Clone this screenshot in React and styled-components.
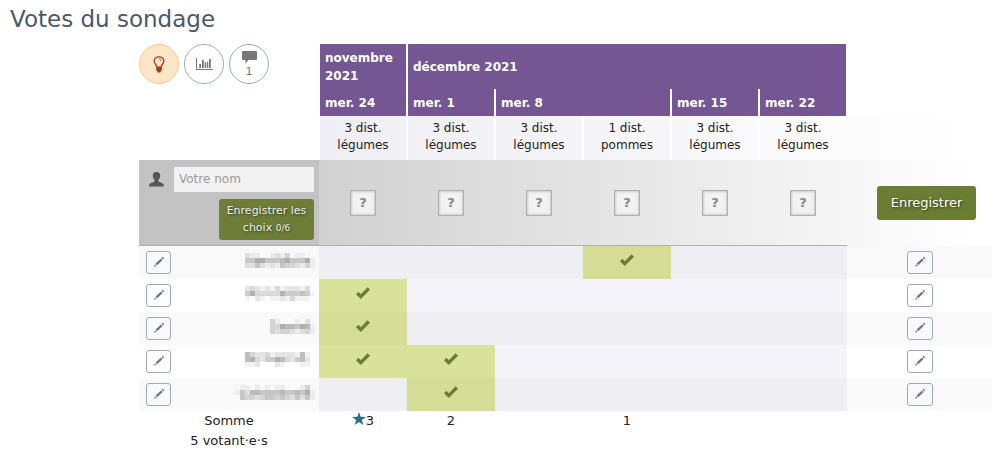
import React from "react";
import styled, { createGlobalStyle, css } from "styled-components";

const Global = createGlobalStyle`
  * { box-sizing: border-box; }
  body {
    margin: 0;
    background: #fff;
    color: #222;
    font-family: "DejaVu Sans", "Liberation Sans", sans-serif;
    font-size: 13px;
    line-height: 20px;
  }
  button, input { font-family: inherit; }
`;

const Page = styled.main`
  padding: 4px 11px 12px 10px;
`;
const Title = styled.h1`
  margin: 0 0 10px;
  font-size: 23px;
  line-height: 30px;
  font-weight: 400;
  color: #4b596d;
`;
const Poll = styled.div`
  margin-left: 129px;
`;
const Table = styled.table`
  width: 100%;
  table-layout: fixed;
  border-collapse: separate;
  border-spacing: 0;
  th, td { padding: 0; }
`;
const NameCol = styled.col`
  width: 180px;
`;
const ActionCol = styled.col`
  width: 145px;
`;
const ToolsCell = styled.td`
  vertical-align: top;
`;
const Tools = styled.div`
  display: flex;
  gap: 5px;
`;
const RoundButton = styled.button`
  display: flex;
  flex-direction: column;
  align-items: center;
  justify-content: center;
  gap: 2px;
  width: 40px;
  height: 40px;
  padding: 0;
  border: 1px solid ${(p) => (p.$active ? "#fdc886" : "#9aabc1")};
  border-radius: 50%;
  background: ${(p) => (p.$active ? "#fde5c8" : "#fff")};
  color: ${(p) => (p.$active ? "#a5391a" : "#777")};
  font-size: 11px;
  line-height: 12px;
`;
const headCell = css`
  background: #735692;
  color: #fff;
  font-size: 12px;
  line-height: 18px;
  font-weight: 700;
  text-align: left;
  border-left: 1px solid #fff;
  border-right: 1px solid #fff;
`;
const Month = styled.th`
  ${headCell}
  && { padding: 0 5px; }
  height: 45px;
`;
const Day = styled.th`
  ${headCell}
  && { padding: 0 5px; }
  height: 27px;
`;
const MomentRow = styled.tr`
  background: linear-gradient(to right, #fff 180px, #eeeef4 180px, #fff 98%);
`;
const Moment = styled.th`
  && { padding-bottom: 2px; }
  height: 44px;
  border-left: 1px solid #fff;
  border-right: 1px solid #fff;
  font-size: 12px;
  line-height: 17px;
  font-weight: 400;
  vertical-align: middle;
`;
const FormRow = styled.tr`
  background: linear-gradient(to right, #c3c3c3 180px, #d1d1d1 180px, #fff 98%);
`;
const FormCell = styled.td`
  height: 86px;
  text-align: center;
  vertical-align: middle;
  border-bottom: 1px solid ${(p) => (p.$plain ? "transparent" : "#b0b0b0")};
  ${(p) => p.$plain && "&& { padding-left: 14px; }"}
`;
const NameForm = styled.div`
  display: flex;
  flex-direction: column;
  align-items: flex-end;
  gap: 7px;
  padding: 1px 5px 0 10px;
`;
const NameField = styled.label`
  display: flex;
  align-items: center;
  justify-content: space-between;
  width: 100%;
  color: #555;
`;
const NameInput = styled.input`
  width: 140px;
  height: 25px;
  padding: 0 5px;
  border: 0;
  background: #f2f2f2;
  color: #444;
  font-size: 12px;
  &::placeholder { color: #999; opacity: 1; }
`;
const SaveButton = styled.button`
  border: 0;
  border-radius: 3px;
  background: #6b7d33;
  color: #fff;
  text-shadow: 1px 1px 3px rgba(0, 0, 0, 0.6);
  ${(p) =>
    p.$small
      ? css`
          width: 95px;
          height: 41px;
          padding: 0 4px;
          background: #6e7d38;
          color: #eee;
          font-size: 11px;
          line-height: 17px;
        `
      : css`
          height: 34px;
          padding: 0 14px;
          font-size: 13px;
        `}
`;
const Count = styled.small`
  font-size: 9px;
  line-height: 12px;
`;
const Choice = styled.button`
  width: 26px;
  height: 26px;
  padding: 0;
  border: 1px solid #b0b0b0;
  background: #f2f2f2;
  box-shadow: inset 0 0 3px #aaa;
  color: #888;
  font-size: 13px;
  font-weight: 700;
  vertical-align: middle;
`;
const VoteRow = styled.tr`
  height: 33px;
  background: ${(p) => (p.$odd ? "#f9f9f9" : "#fff")};
  --empty: ${(p) => (p.$odd ? "#efeef3" : "#f5f4fa")};
  --yes: ${(p) => (p.$odd ? "#d4dc96" : "#d8e29a")};
`;
const NameCell = styled.th`
  vertical-align: middle;
  font-weight: 400;
`;
const Voter = styled.div`
  display: flex;
  align-items: center;
  justify-content: space-between;
  padding: 0 4px 0 7px;
`;
const Tiles = styled.svg`
  margin-bottom: 5px;
`;
const Vote = styled.td`
  background: ${(p) => (p.$yes ? "var(--yes)" : "var(--empty)")};
  text-align: center;
  vertical-align: middle;
  svg { display: block; margin: 0 auto 6px; }
`;
const ActionCell = styled.td`
  text-align: center;
  vertical-align: middle;
`;
const EditButton = styled.button`
  display: inline-flex;
  align-items: center;
  justify-content: center;
  width: ${(p) => (p.$wide ? 26 : 25)}px;
  height: 23px;
  padding: 0 0 2px;
  border: 1px solid #9aabc1;
  border-radius: 3px;
  background: transparent;
  color: #677897;
  vertical-align: middle;
`;
const Sum = styled.td`
  text-align: center;
  vertical-align: top;
`;

const Bulb = () => (
  <svg width="12" height="17" viewBox="0 0 12 17" aria-hidden="true">
    <path d="M3.9 11C3.7 8.8 1.2 7.9 1.2 5.1A4.8 4.3 0 0 1 10.8 5.1C10.8 7.9 8.3 8.8 8.1 11" fill="none" stroke="currentColor" strokeWidth="1.3" />
    <path d="M6.2 3Q7.8 3.2 8.2 4.8" fill="none" stroke="currentColor" strokeWidth="0.9" />
    <path d="M3.2 10.6H8.8V14.2L7.6 15.2V16.4H4.4V15.2L3.2 14.2Z" fill="currentColor" />
  </svg>
);
const Chart = () => (
  <svg width="17" height="12" viewBox="0 0 17 12" aria-hidden="true" fill="currentColor">
    <path d="M0 0H1V11H17V12H0ZM3.2 6H5V10H3.2ZM6 2H7.8V10H6ZM8.7 4.2H10V10H8.7ZM10.8 3.8H12.2V10H10.8ZM13 1H14.8V10H13Z" />
  </svg>
);
const Comment = () => (
  <svg width="15" height="13" viewBox="0 0 15 13" aria-hidden="true" fill="currentColor">
    <path d="M1 0H14Q15 0 15 1V8Q15 9 14 9H6.5L3.4 12.4V9H1Q0 9 0 8V1Q0 0 1 0Z" />
  </svg>
);
const User = () => (
  <svg width="15" height="15" viewBox="0 0 15 15" aria-hidden="true" fill="currentColor">
    <path d="M7.5 0C10.2 0 11.3 1.4 11.2 3.8C11.1 6 10.3 7 9.5 7.8V9.6C10.3 10.6 14.8 11 14.8 13.2V14.5H.2V13.2C.2 11 4.7 10.6 5.5 9.6V7.8C4.7 7 3.9 6 3.8 3.8C3.7 1.4 4.8 0 7.5 0Z" />
  </svg>
);
const Check = () => (
  <svg width="14" height="12" viewBox="0 0 14 12" aria-hidden="true" fill="#6b7d33">
    <path d="M0 7.2L2.4 4.8L4.8 7.2L11.6.3L14 2.7L4.8 11.9Z" />
  </svg>
);
const Pencil = () => (
  <svg width="12" height="12" viewBox="0 0 12 12" aria-hidden="true" fill="currentColor">
    <path d="M2.6 7.6L8 2.4L9.6 4L4.2 9.2ZM8.6 1.8L9.7.8L11.2 2.3L10.2 3.4ZM2 8.2L3.6 9.8L1 10.8Z" />
  </svg>
);
const Star = () => (
  <svg width="14" height="13" viewBox="0 0 14 13" aria-hidden="true" fill="#2a6f88">
    <path d="M7 0L8.7 4.7L14 4.9L9.9 8L11.3 13L7 10.1L2.7 13L4.1 8L0 4.9L5.3 4.7Z" />
  </svg>
);

/* Voter names are hidden behind a mosaic; each digit is the darkness of a 5px tile. */
const Mosaic = ({ rows }) => (
  <Tiles width={rows[0].length * 5} height="15" shapeRendering="crispEdges" role="img" aria-label="Nom masqué">
    {rows.flatMap((row, y) =>
      [...row].map((d, x) =>
        d === "0" ? null : (
          <rect key={`${x}-${y}`} x={x * 5} y={y * 5} width="5" height="5" fill="#000" fillOpacity={Number(d) * 0.05} />
        )
      )
    )}
  </Tiles>
);

const moments = ["légumes", "légumes", "légumes", "pommes", "légumes", "légumes"];
const voters = [
  { votes: [3], name: ["21100121301100", "44664445644461", "22421214332131"] },
  { votes: [0], name: ["23212131222130", "46333336444541", "10210112131110"] },
  { votes: [0], name: ["310001020", "336554651", "323321231"] },
  { votes: [0, 1], name: ["53223122221510", "56324465324520", "11200021000110"] },
  { votes: [1], name: ["0110101011000130", "1425544445445461", "0433234434324241"] },
];
const sums = [3, 2, null, 1, null, null];

export default function App() {
  return (
    <>
      <Global />
      <Page>
        <Title>Votes du sondage</Title>
        <Poll>
          <Table>
            <colgroup>
              <NameCol />
              <col span={6} />
              <ActionCol />
            </colgroup>
            <thead>
              <tr>
                <ToolsCell rowSpan={2}>
                  <Tools>
                    <RoundButton $active aria-label="Aide"><Bulb /></RoundButton>
                    <RoundButton aria-label="Graphique"><Chart /></RoundButton>
                    <RoundButton aria-label="Commentaires"><Comment />1</RoundButton>
                  </Tools>
                </ToolsCell>
                <Month>novembre 2021</Month>
                <Month colSpan={5}>décembre 2021</Month>
                <td rowSpan={2} />
              </tr>
              <tr>
                <Day>mer. 24</Day>
                <Day>mer. 1</Day>
                <Day colSpan={2}>mer. 8</Day>
                <Day>mer. 15</Day>
                <Day>mer. 22</Day>
              </tr>
              <MomentRow>
                <td />
                {moments.map((m, i) => (
                  <Moment key={i}>{m === "pommes" ? 1 : 3} dist.<br />{m}</Moment>
                ))}
                <td />
              </MomentRow>
            </thead>
            <tbody>
              <FormRow>
                <FormCell>
                  <NameForm>
                    <NameField>
                      <User />
                      <NameInput type="text" placeholder="Votre nom" aria-label="Votre nom" />
                    </NameField>
                    <SaveButton $small>Enregistrer les choix <Count>0/6</Count></SaveButton>
                  </NameForm>
                </FormCell>
                {moments.map((m, i) => (
                  <FormCell key={i}><Choice>?</Choice></FormCell>
                ))}
                <FormCell $plain><SaveButton>Enregistrer</SaveButton></FormCell>
              </FormRow>
              {voters.map((v, r) => (
                <VoteRow key={r} $odd={r % 2 === 0}>
                  <NameCell scope="row">
                    <Voter>
                      <EditButton aria-label="Modifier"><Pencil /></EditButton>
                      <Mosaic rows={v.name} />
                    </Voter>
                  </NameCell>
                  {moments.map((m, i) => (
                    <Vote key={i} $yes={v.votes.includes(i)}>{v.votes.includes(i) && <Check />}</Vote>
                  ))}
                  <ActionCell>
                    <EditButton $wide aria-label="Modifier"><Pencil /></EditButton>
                  </ActionCell>
                </VoteRow>
              ))}
            </tbody>
            <tfoot>
              <tr>
                <Sum>Somme<br />5 votant·e·s</Sum>
                {sums.map((s, i) => (
                  <Sum key={i}>{s === 3 && <Star />}{s}</Sum>
                ))}
                <td />
              </tr>
            </tfoot>
          </Table>
        </Poll>
      </Page>
    </>
  );
}
